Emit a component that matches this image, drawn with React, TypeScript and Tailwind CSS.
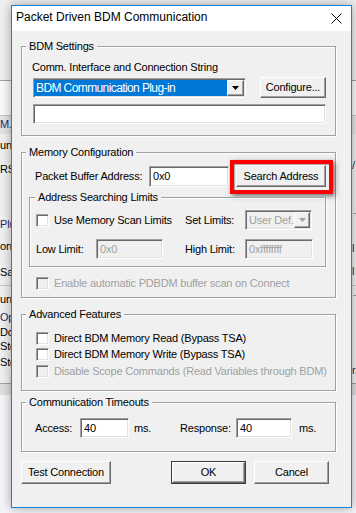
import React from "react";

const sunken =
  "border border-t-[#a0a0a0] border-l-[#a0a0a0] border-r-white border-b-white shadow-[inset_1px_1px_0_#696969,inset_-1px_-1px_0_#e3e3e3]";
const raised =
  "border border-t-white border-l-white border-r-[#696969] border-b-[#696969] shadow-[inset_-1px_-1px_0_#a0a0a0,inset_1px_1px_0_#f0f0f0] bg-[#f0f0f0]";

function Group({
  title,
  className,
  legendLeft = "left-[4px]",
  children,
}: {
  title: string;
  className?: string;
  legendLeft?: string;
  children: React.ReactNode;
}) {
  return (
    <div
      className={
        "relative border border-[#a0a0a0] shadow-[inset_1px_1px_0_#fff,1px_1px_0_#fff] " +
        (className ?? "")
      }
    >
      <span
        className={
          "absolute top-[-7px] px-[3px] bg-[#f0f0f0] leading-[13px] whitespace-nowrap " +
          legendLeft
        }
      >
        {title}
      </span>
      {children}
    </div>
  );
}

function Check({ label, disabled }: { label: string; disabled?: boolean }) {
  return (
    <div className="flex items-center">
      <div
        className={
          "w-[13px] h-[13px] shrink-0 " +
          sunken +
          (disabled ? " bg-[#f0f0f0]" : " bg-white")
        }
      />
      <span
        className={
          "ml-[5px] leading-[13px] whitespace-nowrap " +
          (disabled ? "text-[#a0a0a0]" : "")
        }
      >
        {label}
      </span>
    </div>
  );
}

function Arrow({ disabled }: { disabled?: boolean }) {
  return (
    <svg width="7" height="4" viewBox="0 0 7 4">
      <path d="M0 0h7L3.5 4z" fill={disabled ? "#a0a0a0" : "#000"} />
    </svg>
  );
}

function Btn({
  label,
  className,
}: {
  label: string;
  className?: string;
}) {
  return (
    <div
      className={
        "flex items-center justify-center whitespace-nowrap " +
        raised +
        " " +
        (className ?? "")
      }
    >
      {label}
    </div>
  );
}

export default function App() {
  return (
    <div className="relative w-[356px] h-[513px] overflow-hidden bg-[#f0f0f0] font-['Liberation_Sans',Arial,sans-serif] text-[11px] tracking-[-0.2px] text-black">
      {/* background application fragments */}
      <div className="absolute left-0 top-[80px] w-[356px] h-px bg-[#a0a0a0]" />
      <div className="absolute left-0 top-[81px] w-[356px] h-[34px] bg-[#fafafa]" />
      <div className="absolute left-0 top-[115px] w-[356px] h-px bg-[#c8c8c8]" />
      <div className="absolute left-0 top-[116px] w-[356px] h-[18px] bg-[#e4e4e4]" />
      <div className="absolute left-0 top-[285px] w-[356px] h-px bg-[#c8c8c8]" />
      <div className="absolute left-0 top-[383px] w-[356px] h-px bg-[#a0a0a0]" />
      <div className="absolute left-0 top-[384px] w-[356px] h-[11px] bg-[#dedede]" />
      <div className="absolute left-0 top-[395px] w-[356px] h-[118px] bg-[#f3f5f8]" />
      <div className="absolute left-[353px] top-[213px] w-[3px] h-px bg-[#a0a0a0]" />
      <div className="absolute left-[353px] top-[295px] w-[3px] h-px bg-[#a0a0a0]" />
      {[
        ["M.", 119, "text-[#1c2a6e]"],
        ["un", 140, ""],
        ["RS", 164, ""],
        ["Plu", 219, "text-[#1c2a6e]"],
        ["on", 241, ""],
        ["Sav", 267, ""],
        ["un", 294, ""],
        ["Op", 312, "text-[#1c2a6e]"],
        ["Do", 327, ""],
        ["Sto", 341, ""],
        ["Sto", 357, ""],
      ].map(([t, y, c], i) => (
        <span
          key={i}
          className={"absolute left-0 leading-[11px] text-[11px] " + c}
          style={{ top: y as number }}
        >
          {t as string}
        </span>
      ))}
      {[
        ["/", 159],
        ["l", 242],
        ["l", 265],
        ["r", 364],
      ].map(([t, y], i) => (
        <span
          key={i}
          className="absolute left-[352px] leading-[13px] text-[11px] text-[#1c2a6e]"
          style={{ top: y as number }}
        >
          {t as string}
        </span>
      ))}

      {/* dialog window */}
      <div className="absolute left-[11px] top-[5px] w-[341px] h-[503px] border border-[#1883d7] bg-[#f0f0f0] shadow-[0_0_10px_rgba(0,0,0,0.35)] flex flex-col">
        {/* title bar */}
        <div className="h-[25px] shrink-0 bg-white flex items-start justify-between pt-[4px] pl-[4px] pr-[9px]">
          <span className="text-[12px] tracking-normal leading-[14px] font-['Segoe_UI','Liberation_Sans',Arial,sans-serif]">
            Packet Driven BDM Communication
          </span>
          <svg width="11" height="11" viewBox="0 0 11 11" className="mt-[3px]">
            <path d="M0.5 0.5L10.5 10.5M10.5 0.5L0.5 10.5" stroke="#000" strokeWidth="1" />
          </svg>
        </div>

        {/* body */}
        <div className="flex flex-col pl-[9px] pt-[15px]">
          {/* BDM Settings */}
          <Group title="BDM Settings" className="w-[315px] h-[90px]">
            <div className="flex flex-col pl-[10px] pt-[14px]">
              <span className="leading-[13px] whitespace-nowrap">
                Comm. Interface and Connection String
              </span>
              <div className="flex items-center h-[21px] mt-[3px] pl-px">
                <div className={"w-[213px] h-[20px] bg-white flex " + sunken}>
                  <div className="flex-1 my-px h-[16px] bg-[#0078d7] text-white text-[12px] tracking-[-0.6px] leading-[16px] pl-[2px] whitespace-nowrap overflow-hidden">
                    BDM Communication Plug-in
                  </div>
                  <div
                    className={
                      "w-[17px] h-[16px] my-px mr-px flex items-center justify-center " +
                      raised
                    }
                  >
                    <Arrow />
                  </div>
                </div>
                <Btn label="Configure..." className="ml-[14px] w-[66px] h-[21px]" />
              </div>
              <div className={"mt-[6px] ml-px w-[293px] h-[20px] bg-white " + sunken} />
            </div>
          </Group>

          {/* Memory Configuration */}
          <Group title="Memory Configuration" className="mt-[16px] w-[315px] h-[146px]">
            <div className="flex flex-col pl-[7px] pt-[12px]">
              <div className="flex items-center h-[22px] pl-[6px]">
                <span className="w-[114px] whitespace-nowrap">Packet Buffer Address:</span>
                <div
                  className={
                    "w-[80px] h-[21px] bg-white pl-[3px] leading-[19px] " + sunken
                  }
                >
                  0x0
                </div>
                <div className="relative ml-[7px]">
                  <Btn label="Search Address" className="w-[90px] h-[22px]" />
                  <div className="absolute -left-[6px] -right-[7px] -top-[5px] -bottom-[7px] border-[4px] border-[#f00] shadow-[2px_2px_5px_rgba(0,0,0,0.55),inset_1px_1px_1px_rgba(0,0,0,0.3)]" />
                </div>
              </div>

              <Group
                title="Address Searching Limits"
                legendLeft="left-[5px]"
                className="mt-[10px] w-[297px] h-[70px]"
              >
                <div className="flex flex-col pl-[6px] pt-[12px]">
                  <div className="flex items-center h-[20px]">
                    <div className="w-[149px]">
                      <Check label="Use Memory Scan Limits" />
                    </div>
                    <span className="w-[60px] whitespace-nowrap">Set Limits:</span>
                    <div className={"w-[67px] h-[20px] bg-[#f0f0f0] flex " + sunken}>
                      <span className="flex-1 pl-[3px] leading-[18px] text-[#a0a0a0] whitespace-nowrap overflow-hidden">
                        User Def.
                      </span>
                      <div
                        className={
                          "w-[16px] h-[16px] my-px mr-px flex items-center justify-center " +
                          raised
                        }
                      >
                        <Arrow disabled />
                      </div>
                    </div>
                  </div>
                  <div className="flex items-center h-[20px] mt-[9px]">
                    <span className="w-[60px] whitespace-nowrap">Low Limit:</span>
                    <div
                      className={
                        "w-[67px] h-[20px] bg-[#f0f0f0] pl-[3px] leading-[18px] text-[#a0a0a0] " +
                        sunken
                      }
                    >
                      0x0
                    </div>
                    <span className="ml-[22px] w-[60px] whitespace-nowrap">High Limit:</span>
                    <div
                      className={
                        "w-[68px] h-[20px] bg-[#f0f0f0] pl-[3px] leading-[18px] text-[#a0a0a0] " +
                        sunken
                      }
                    >
                      0xffffffff
                    </div>
                  </div>
                </div>
              </Group>

              <div className="mt-[10px] pl-[7px]">
                <Check label="Enable automatic PDBDM buffer scan on Connect" disabled />
              </div>
            </div>
          </Group>

          {/* Advanced Features */}
          <Group title="Advanced Features" className="mt-[16px] w-[315px] h-[77px]">
            <div className="flex flex-col pl-[14px] pt-[15px]">
              <div className="h-[16px] flex items-center">
                <Check label="Direct BDM Memory Read (Bypass TSA)" />
              </div>
              <div className="h-[17px] flex items-center">
                <Check label="Direct BDM Memory Write (Bypass TSA)" />
              </div>
              <div className="h-[16px] flex items-center">
                <Check label="Disable Scope Commands (Read Variables through BDM)" disabled />
              </div>
            </div>
          </Group>

          {/* Communication Timeouts */}
          <Group title="Communication Timeouts" className="mt-[11px] w-[315px] h-[50px]">
            <div className="flex items-center h-[20px] mt-[15px] pl-[13px]">
              <span className="w-[45px]">Access:</span>
              <div
                className={"w-[49px] h-[20px] bg-white pl-[3px] leading-[18px] " + sunken}
              >
                40
              </div>
              <span className="ml-[5px] w-[46px]">ms.</span>
              <span className="w-[56px]">Response:</span>
              <div
                className={"w-[56px] h-[20px] bg-white pl-[3px] leading-[18px] " + sunken}
              >
                40
              </div>
              <span className="ml-[7px]">ms.</span>
            </div>
          </Group>

          {/* Buttons */}
          <div className="flex items-center mt-[9px] h-[23px]">
            <Btn label="Test Connection" className="w-[90px] h-[23px]" />
            <div className="ml-[60px] border border-[#3c3c3c]">
              <Btn label="OK" className="w-[73px] h-[21px]" />
            </div>
            <Btn label="Cancel" className="ml-[8px] w-[75px] h-[23px]" />
          </div>
        </div>
      </div>
    </div>
  );
}
